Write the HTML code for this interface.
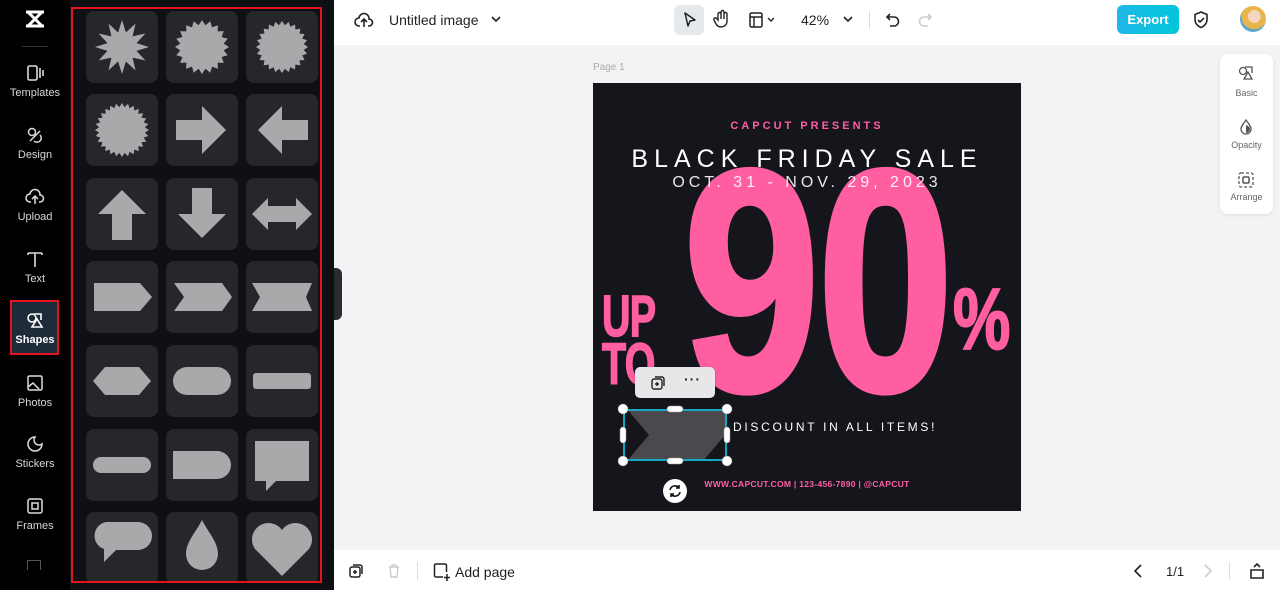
<!DOCTYPE html>
<html><head><meta charset="utf-8">
<style>
*{margin:0;padding:0;box-sizing:border-box}
body{width:1280px;height:590px;overflow:hidden;font-family:"Liberation Sans",sans-serif;background:#f1f3f5;position:relative}
.side{position:absolute;left:0;top:0;width:70px;height:590px;background:#000}
.nav{position:absolute;left:0;width:70px;text-align:center;color:#d8d8d8;font-size:11px}
.nav svg{display:block;margin:0 auto 5px}
.panel{position:absolute;left:70px;top:0;width:264px;height:590px;background:#0f1013}
.redbox{position:absolute;left:1px;top:7px;width:251px;height:576px;border:2px solid #e3141b;overflow:hidden}
.tile{position:absolute;width:72px;height:72px;background:#26272b;border-radius:8px}
.tile svg{position:absolute;left:0;top:0}
.top{position:absolute;left:334px;top:0;width:946px;height:45px;background:#fff}
.bot{position:absolute;left:334px;top:550px;width:946px;height:40px;background:#fff}
.poster{position:absolute;left:593px;top:83px;width:428px;height:428px;background:#15161c;overflow:hidden}
</style></head><body>
<div class="side">
 <svg style="position:absolute;left:24px;top:9px" width="22" height="20" viewBox="0 0 22 20"><path d="M2 3h18M2 17h18M4 3l14 14M18 3L4 17" stroke="#fff" stroke-width="3" fill="none"/></svg>
 <div style="position:absolute;left:22px;top:46px;width:26px;height:1px;background:#333"></div>
 <div class="nav" style="top:64px"><svg width="20" height="18" viewBox="0 0 20 18"><rect x="3" y="2" width="9" height="14" rx="1.5" stroke="#ddd" stroke-width="1.6" fill="none"/><path d="M15 4v10M18 6v6" stroke="#ddd" stroke-width="1.6"/></svg>Templates</div>
 <div class="nav" style="top:126px"><svg width="20" height="18" viewBox="0 0 20 18"><circle cx="7" cy="6" r="3.5" stroke="#ddd" stroke-width="1.5" fill="none"/><path d="M5 15l10-10M9 15a4 4 0 0 0 6-6" stroke="#ddd" stroke-width="1.5" fill="none"/></svg>Design</div>
 <div class="nav" style="top:188px"><svg width="20" height="18" viewBox="0 0 20 18"><path d="M6 14H5a4 4 0 0 1 0-8 5 5 0 0 1 10 1 3.5 3.5 0 0 1 0 7h-1M10 16V9M7 11l3-3 3 3" stroke="#ddd" stroke-width="1.5" fill="none"/></svg>Upload</div>
 <div class="nav" style="top:250px"><svg width="20" height="18" viewBox="0 0 20 18"><path d="M3 3h14M10 3v14M3 3v2M17 3v2" stroke="#ddd" stroke-width="1.6" fill="none"/></svg>Text</div>
 <div style="position:absolute;left:10px;top:300px;width:49px;height:55px;border:2px solid #e3141b;background:#1d2b3a"></div>
 <div class="nav" style="top:311px;color:#fff;font-weight:bold"><svg width="20" height="18" viewBox="0 0 20 18"><circle cx="7" cy="7" r="4" stroke="#fff" stroke-width="1.6" fill="none"/><path d="M9 3h7v6M12 8l-5 8h10z" stroke="#fff" stroke-width="1.6" fill="#1d2b3a"/></svg>Shapes</div>
 <div class="nav" style="top:374px"><svg width="20" height="18" viewBox="0 0 20 18"><rect x="3" y="2" width="14" height="14" rx="1.5" stroke="#ddd" stroke-width="1.5" fill="none"/><path d="M3 13l5-4 6 6M13 6h.1" stroke="#ddd" stroke-width="1.5"/></svg>Photos</div>
 <div class="nav" style="top:435px"><svg width="20" height="18" viewBox="0 0 20 18"><path d="M10 2a7 7 0 1 0 7 7 5 5 0 0 1-7-7z" stroke="#ddd" stroke-width="1.5" fill="none"/></svg>Stickers</div>
 <div class="nav" style="top:497px"><svg width="20" height="18" viewBox="0 0 20 18"><rect x="3" y="2" width="14" height="14" rx="2" stroke="#ddd" stroke-width="1.5" fill="none"/><rect x="7" y="6" width="6" height="6" stroke="#ddd" stroke-width="1.5" fill="none"/></svg>Frames</div>
 <div style="position:absolute;left:27px;top:560px;width:14px;height:10px;border:1.5px solid #555;border-bottom:none"></div>
</div>
<div class="panel"><div class="redbox" id="rb"></div></div>
<div style="position:absolute;left:334px;top:268px;width:8px;height:52px;background:#2a2b2f;border-radius:0 6px 6px 0"></div>

<div class="top">
 <svg style="position:absolute;left:20px;top:11px" width="20" height="18" viewBox="0 0 20 18"><path d="M6 15H5a4 4 0 0 1 0-8 5 5 0 0 1 10 1 3.5 3.5 0 0 1 0 7h-1M10 16V9M7 11l3-3 3 3" stroke="#222" stroke-width="1.6" fill="none"/></svg>
 <div style="position:absolute;left:55px;top:12px;font-size:14px;color:#222">Untitled image</div>
 <svg style="position:absolute;left:156px;top:14px" width="12" height="10"><path d="M2 3l4 4 4-4" stroke="#222" stroke-width="1.6" fill="none"/></svg>
 <div style="position:absolute;left:340px;top:5px;width:30px;height:30px;background:#e6e9ec;border-radius:6px"></div>
 <svg style="position:absolute;left:346px;top:10px" width="18" height="20"><path d="M5 3l10 7-5 1-2 5z" stroke="#222" stroke-width="1.5" fill="none" stroke-linejoin="round"/></svg>
 <svg style="position:absolute;left:378px;top:9px" width="20" height="22"><path d="M6 11V5a1.5 1.5 0 0 1 3 0v5V3a1.5 1.5 0 0 1 3 0v7V5a1.5 1.5 0 0 1 3 0v8a6 6 0 0 1-11 2l-2-4a1.4 1.4 0 0 1 2.5-1.5z" stroke="#222" stroke-width="1.4" fill="none"/></svg>
 <svg style="position:absolute;left:414px;top:11px" width="30" height="18"><rect x="2" y="2" width="12" height="14" rx="1.5" stroke="#222" stroke-width="1.5" fill="none"/><path d="M2 6h12M6 6v10M20 7l3 3 3-3" stroke="#222" stroke-width="1.4" fill="none"/></svg>
 <div style="position:absolute;left:467px;top:12px;font-size:14px;color:#222">42%</div>
 <svg style="position:absolute;left:508px;top:14px" width="12" height="10"><path d="M2 3l4 4 4-4" stroke="#222" stroke-width="1.6" fill="none"/></svg>
 <div style="position:absolute;left:535px;top:11px;width:1px;height:18px;background:#ddd"></div>
 <svg style="position:absolute;left:550px;top:10px" width="18" height="20"><path d="M6 4L3 7l3 3M3 7h7a4 4 0 0 1 0 9H6" stroke="#222" stroke-width="1.6" fill="none"/></svg>
 <svg style="position:absolute;left:582px;top:10px" width="18" height="20"><path d="M12 4l3 3-3 3M15 7H8a4 4 0 0 0 0 9h4" stroke="#ccc" stroke-width="1.6" fill="none"/></svg>
 <div style="position:absolute;left:783px;top:5px;width:62px;height:29px;border-radius:6px;background:linear-gradient(90deg,#20b8e8,#00c6db);color:#fff;font-weight:bold;font-size:13px;text-align:center;line-height:29px">Export</div>
 <svg style="position:absolute;left:858px;top:10px" width="18" height="20"><path d="M9 2l6 2.5v5c0 4-3 7-6 8-3-1-6-4-6-8v-5z M6 10l2 2 4-4" stroke="#222" stroke-width="1.6" fill="none"/></svg>
 <div style="position:absolute;left:906px;top:6px;width:26px;height:26px;border-radius:50%;background:radial-gradient(circle at 55% 40%,#f2d6c0 0 30%,#e7b54a 31% 60%,#5aa9c9 61%)"></div>
</div>

<div style="position:absolute;left:593px;top:62px;font-size:10px;color:#aaa">Page 1</div>
<div style="position:absolute;left:1220px;top:54px;width:53px;height:160px;background:#fff;border-radius:8px;box-shadow:0 1px 4px rgba(0,0,0,.08)">
 <svg style="position:absolute;left:17px;top:11px" width="18" height="16"><circle cx="6" cy="6" r="3.5" stroke="#555" stroke-width="1.3" fill="none"/><path d="M8 2h7v6M11 7l-4 7h8z" stroke="#555" stroke-width="1.3" fill="#fff"/></svg>
 <div style="position:absolute;top:34px;width:53px;text-align:center;font-size:9px;color:#666">Basic</div>
 <svg style="position:absolute;left:18px;top:64px" width="16" height="18"><path d="M8 2C5 6 3 8.5 3 11a5 5 0 0 0 10 0c0-2.5-2-5-5-9z" stroke="#555" stroke-width="1.3" fill="none"/><path d="M8 7v8a4 4 0 0 0 4-4c0-1.5-1.5-3-4-4z" fill="#555"/></svg>
 <div style="position:absolute;top:86px;width:53px;text-align:center;font-size:9px;color:#666">Opacity</div>
 <svg style="position:absolute;left:17px;top:117px" width="18" height="18"><rect x="2" y="2" width="14" height="14" rx="2" stroke="#555" stroke-width="1.3" fill="none" stroke-dasharray="3 2"/><rect x="6" y="6" width="6" height="6" rx="1" stroke="#555" stroke-width="1.5" fill="none"/></svg>
 <div style="position:absolute;top:138px;width:53px;text-align:center;font-size:9px;color:#666">Arrange</div>
</div>

<div class="poster">
 <div style="position:absolute;left:0;width:428px;top:37px;text-align:center;color:#ff5fa0;font-weight:bold;font-size:11px;letter-spacing:3px">CAPCUT PRESENTS</div>
 <div style="position:absolute;left:90px;top:40px;font-weight:bold;color:#ff5fa0;-webkit-text-stroke:5px #ff5fa0;font-size:316px;line-height:316px;letter-spacing:-4px;transform:scaleX(.78);transform-origin:left;white-space:nowrap">90</div>
 <div style="position:absolute;left:0;width:428px;top:62px;text-align:center;color:#fff;font-size:25px;letter-spacing:6px">BLACK FRIDAY SALE</div>
 <div style="position:absolute;left:0;width:428px;top:91px;text-align:center;color:#fff;font-size:16px;letter-spacing:4px;opacity:.9">OCT. 31 - NOV. 29, 2023</div>
 <div style="position:absolute;left:9px;top:210px;color:#ff5fa0;font-weight:bold;-webkit-text-stroke:1.5px #ff5fa0;font-size:58px;line-height:48px;transform:scaleX(.68);transform-origin:left;letter-spacing:-1px">UP<br>TO</div>
 <div style="position:absolute;left:360px;top:188px;color:#ff5fa0;font-weight:bold;-webkit-text-stroke:2px #ff5fa0;font-size:86px;transform:scaleX(.75);transform-origin:left">%</div>
 <div style="position:absolute;left:140px;top:337px;color:#fff;font-size:12px;letter-spacing:2.7px">DISCOUNT IN ALL ITEMS!</div>
 <div style="position:absolute;left:0;width:428px;top:396px;text-align:center;color:#ff5fa0;font-size:8.5px;font-weight:bold;letter-spacing:.3px">WWW.CAPCUT.COM | 123-456-7890 | @CAPCUT</div>
 <svg style="position:absolute;left:30px;top:326px" width="106" height="52"><polygon points="4,0 102,0 102,26 80,52 4,52 26,26" fill="#4a4a4e"/></svg>
</div>
<div style="position:absolute;left:635px;top:367px;width:80px;height:31px;background:#e8e6e8;border-radius:5px;box-shadow:0 1px 3px rgba(0,0,0,.2)">
 <svg style="position:absolute;left:15px;top:8px" width="16" height="16"><rect x="2" y="4" width="10" height="10" rx="2" stroke="#222" stroke-width="1.4" fill="none"/><path d="M5 2h7a2 2 0 0 1 2 2v7M7 7v4M5 9h4" stroke="#222" stroke-width="1.4" fill="none"/></svg>
 <div style="position:absolute;left:49px;top:4px;font-size:14px;font-weight:bold;color:#222;letter-spacing:1px">···</div>
</div>
<div style="position:absolute;left:623px;top:409px;width:104px;height:52px;border:2px solid #15a8c0"></div>
<svg style="position:absolute;left:616px;top:402px" width="118" height="66">
 <g fill="#fff" stroke="#999" stroke-width=".5">
 <circle cx="7" cy="7" r="5"/><circle cx="111" cy="7" r="5"/><circle cx="7" cy="59" r="5"/><circle cx="111" cy="59" r="5"/>
 <rect x="51" y="4" width="16" height="6" rx="3"/><rect x="51" y="56" width="16" height="6" rx="3"/>
 <rect x="4" y="25" width="6" height="16" rx="3"/><rect x="108" y="25" width="6" height="16" rx="3"/></g></svg>
<div style="position:absolute;left:663px;top:479px;width:24px;height:24px;border-radius:50%;background:#fff"><svg width="24" height="24"><path d="M7 11a5 5 0 0 1 9-2M17 13a5 5 0 0 1-9 2M16 6v3h-3M8 18v-3h3" stroke="#111" stroke-width="1.6" fill="none"/></svg></div>

<div class="bot">
 <svg style="position:absolute;left:14px;top:13px" width="16" height="16"><rect x="2" y="4" width="10" height="10" rx="2" stroke="#222" stroke-width="1.5" fill="none"/><path d="M5 2h7a2 2 0 0 1 2 2v7M7 7v4M5 9h4" stroke="#222" stroke-width="1.5" fill="none"/></svg>
 <svg style="position:absolute;left:52px;top:13px" width="16" height="16"><path d="M3 4h10M6 4V2h4v2M4 4l1 10h6l1-10" stroke="#ccc" stroke-width="1.4" fill="none"/></svg>
 <div style="position:absolute;left:83px;top:12px;width:1px;height:18px;background:#ddd"></div>
 <svg style="position:absolute;left:98px;top:12px" width="20" height="20"><path d="M11 15H4a1.5 1.5 0 0 1-1.5-1.5v-10A1.5 1.5 0 0 1 4 2h9a1.5 1.5 0 0 1 1.5 1.5V10M15 12v7M12 15.5h6" stroke="#222" stroke-width="1.5" fill="none"/></svg>
 <div style="position:absolute;left:121px;top:14px;font-size:14px;color:#222">Add page</div>
 <svg style="position:absolute;left:798px;top:13px" width="12" height="16"><path d="M9 2L3 8l6 6" stroke="#222" stroke-width="1.6" fill="none"/></svg>
 <div style="position:absolute;left:832px;top:14px;font-size:13px;color:#222">1/1</div>
 <svg style="position:absolute;left:868px;top:13px" width="12" height="16"><path d="M3 2l6 6-6 6" stroke="#ccc" stroke-width="1.6" fill="none"/></svg>
 <div style="position:absolute;left:895px;top:12px;width:1px;height:18px;background:#ddd"></div>
 <svg style="position:absolute;left:914px;top:11px" width="18" height="20"><path d="M3 9h12v8H3zM6 6l3-3 3 3" stroke="#222" stroke-width="1.6" fill="none"/></svg>
</div>

<script>
const G='#a9a9ab';
function star(n,ro,ri,cx=36,cy=36){let p=[];for(let i=0;i<2*n;i++){let a=Math.PI*i/n-Math.PI/2,r=i%2?ri:ro;p.push((cx+r*Math.cos(a)).toFixed(1)+','+(cy+r*Math.sin(a)).toFixed(1));}return `<polygon points="${p.join(' ')}" fill="${G}"/>`;}
const shapes=[
star(12,27,15),star(20,27,22),star(24,26,22),
star(28,27,23),
`<polygon points="10,26 36,26 36,12 60,36 36,60 36,46 10,46" fill="${G}"/>`,
`<polygon points="62,26 36,26 36,12 12,36 36,60 36,46 62,46" fill="${G}"/>`,
`<polygon points="26,62 26,36 12,36 36,12 60,36 46,36 46,62" fill="${G}"/>`,
`<polygon points="26,10 26,36 12,36 36,60 60,36 46,36 46,10" fill="${G}"/>`,
`<polygon points="6,36 22,20 22,28 50,28 50,20 66,36 50,52 50,44 22,44 22,52" fill="${G}"/>`,
`<polygon points="8,22 54,22 66,36 54,50 8,50" fill="${G}"/>`,
`<polygon points="8,22 56,22 66,36 56,50 8,50 18,36" fill="${G}"/>`,
`<polygon points="6,22 66,22 60,36 66,50 6,50 14,36" fill="${G}"/>`,
`<polygon points="7,36 19,22 53,22 65,36 53,50 19,50" fill="${G}"/>`,
`<rect x="7" y="22" width="58" height="28" rx="14" fill="${G}"/>`,
`<rect x="7" y="28" width="58" height="16" rx="3" fill="${G}"/>`,
`<rect x="7" y="28" width="58" height="16" rx="8" fill="${G}"/>`,
`<path d="M7 22h44a14 14 0 0 1 0 28H7z" fill="${G}"/>`,
`<polygon points="9,12 63,12 63,52 30,52 20,62 20,52 9,52" fill="${G}"/>`,
`<path d="M20 10h32a14 14 0 0 1 0 28H30l-12 12v-13A14 14 0 0 1 20 10z" fill="${G}"/>`,
`<path d="M36 8C30 20 20 30 20 42a16 16 0 0 0 32 0C52 30 42 20 36 8z" fill="${G}"/>`,
`<path d="M36 64L9 37A14 14 0 0 1 36 18a14 14 0 0 1 27 19z" fill="${G}"/>`
];
const rb=document.getElementById('rb');let h='';
const xs=[13,93,173],ys=[2,85,169,252,336,420,503];
shapes.forEach((s,i)=>{const c=i%3,r=Math.floor(i/3);h+=`<div class="tile" style="left:${xs[c]}px;top:${ys[r]}px"><svg width="72" height="72" viewBox="0 0 72 72">${s}</svg></div>`;});
rb.innerHTML=h;
</script>
</body></html>
